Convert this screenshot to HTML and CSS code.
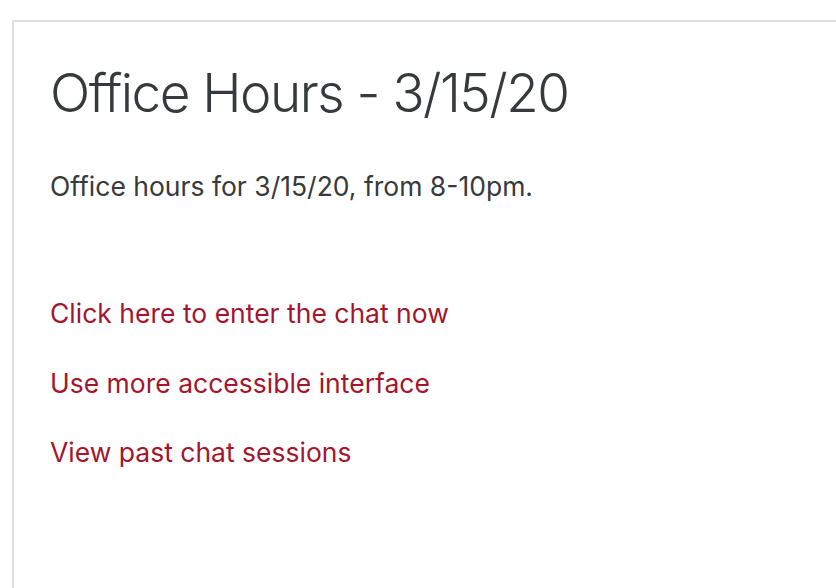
FILE: index.html
```html
<!DOCTYPE html>
<html>
<head>
<meta charset="utf-8">
<link rel="stylesheet" href="styles.css">
</head>
<body>
<div class="card">
  <h2 class="title">Office Hours - 3/15/20</h2>
  <div class="intro">Office hours for 3/15/20, from 8-10pm.</div>
  <div class="links">
    <a class="link" href="#">Click here to enter the chat now</a>
    <a class="link" href="#">Use more accessible interface</a>
    <a class="link" href="#">View past chat sessions</a>
  </div>
</div>
</body>
</html>
```

FILE: styles.css
```css
html, body {
  margin: 0;
  padding: 0;
  background: #fff;
  overflow: hidden;
}
body {
  font-family: Inter, "Noto Sans", sans-serif;
  color: #373a3c;
  padding: 20px 0 0 12px;
  height: 588px;
  box-sizing: border-box;
}
.card {
  border: 2px solid #dedede;
  border-right: none;
  border-bottom: none;
  height: 100%;
  box-sizing: border-box;
  padding: 41px 0 0 36px;
}
.title {
  margin: 0;
  font-weight: 300;
  font-size: 53px;
  line-height: 60px;
  letter-spacing: -1.5px;
}
.intro {
  margin-top: 45px;
  font-size: 26.5px;
  line-height: 36px;
}
.links {
  display: flex;
  flex-direction: column;
  align-items: flex-start;
  gap: 33.5px;
  margin-top: 91px;
}
.link {
  color: #a3162d;
  text-decoration: none;
  font-size: 26.5px;
  line-height: 36px;
}
```
